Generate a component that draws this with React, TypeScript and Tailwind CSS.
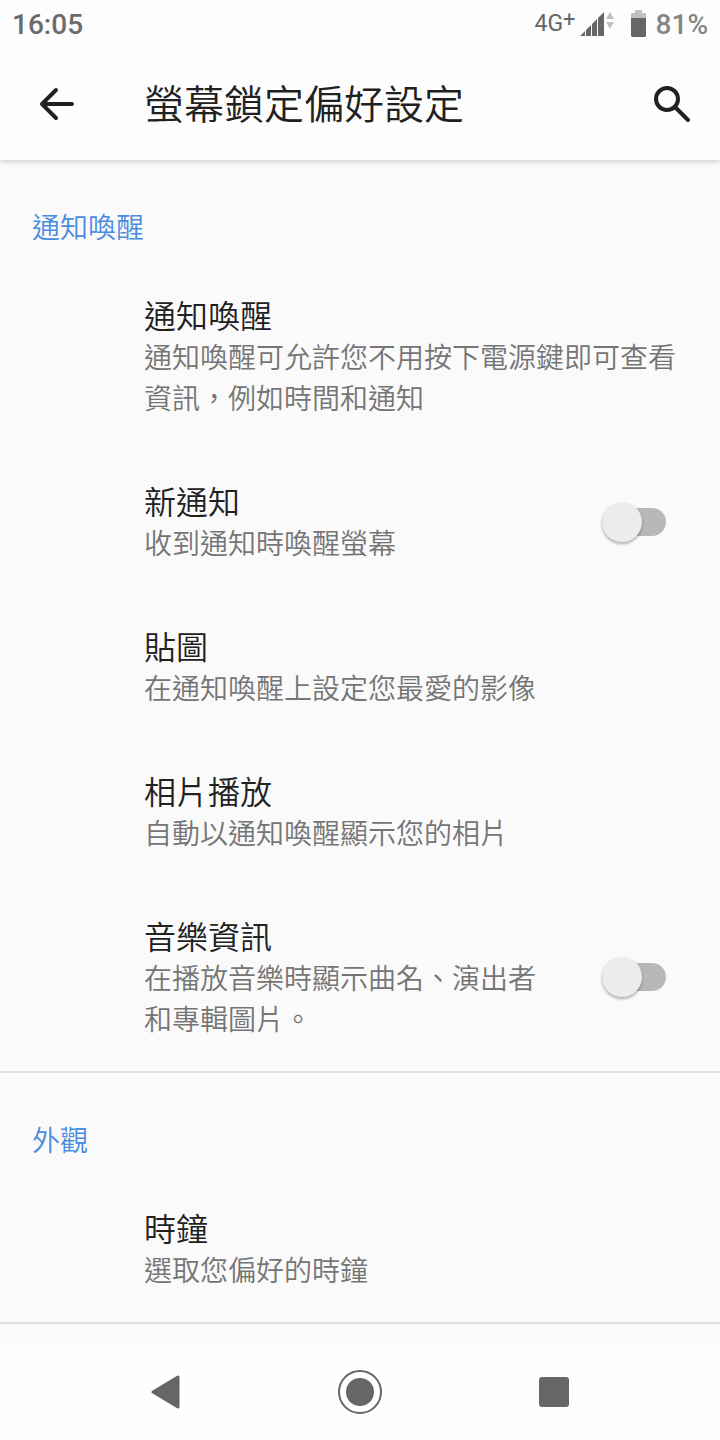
import React, { useState } from 'react';

interface PreferenceItem {
  id: string;
  title: string;
  summary: string;
  hasSwitch?: boolean;
}

interface PreferenceSection {
  id: string;
  title: string;
  items: PreferenceItem[];
}

const sections: PreferenceSection[] = [
  {
    id: 'wake',
    title: '通知喚醒',
    items: [
      { id: 'about', title: '通知喚醒', summary: '通知喚醒可允許您不用按下電源鍵即可查看資訊，例如時間和通知' },
      { id: 'newNotification', title: '新通知', summary: '收到通知時喚醒螢幕', hasSwitch: true },
      { id: 'sticker', title: '貼圖', summary: '在通知喚醒上設定您最愛的影像' },
      { id: 'photos', title: '相片播放', summary: '自動以通知喚醒顯示您的相片' },
      { id: 'music', title: '音樂資訊', summary: '在播放音樂時顯示曲名、演出者和專輯圖片。', hasSwitch: true },
    ],
  },
  {
    id: 'appearance',
    title: '外觀',
    items: [{ id: 'clock', title: '時鐘', summary: '選取您偏好的時鐘' }],
  },
];

const StatusBar: React.FC = () => (
  <div className="flex h-12 items-center justify-between px-3 font-['Roboto',sans-serif] text-[28px] leading-8 font-medium">
    <span className="pt-0.5 text-[#6b6b6b]">16:05</span>
    <div className="flex items-center">
      <span className="mr-1 flex items-start font-normal text-[#666666]">
        <span className="text-[23px] leading-8">4G</span>
        <span className="text-[22px] leading-6">+</span>
      </span>
      <svg className="h-7 w-9" viewBox="0 0 36 28" aria-hidden="true">
        <path d="M0 26h5v-5zM6 26h5V15l-5 5zM12 26h5V9l-5 5zM18 26h6V2l-6 6z" fill="#666666" />
        <path d="M26 9l4-7 4 7zM26 12h8l-4 7z" fill="#c0c0c0" />
      </svg>
      <svg className="mr-2.5 ml-3.5 h-7 w-4" viewBox="0 0 16 28" aria-hidden="true">
        <path d="M5 0h7v3h4v5H1V3h4z" fill="#c0c0c0" />
        <path d="M1 8h15v18l-1 1H2l-1-1z" fill="#666666" />
      </svg>
      <span className="pt-0.5 text-[#858585]">81%</span>
    </div>
  </div>
);

const AppBar: React.FC = () => (
  <div className="flex h-28 items-center px-8">
    <button type="button" aria-label="返回" className="mr-16 flex h-12 w-12 items-center justify-center">
      <svg className="h-12 w-12" viewBox="0 0 48 48" fill="none" stroke="#212121" strokeWidth="4" strokeLinecap="round" strokeLinejoin="round" aria-hidden="true">
        <path d="M40 24H10M24 10L10 24l14 14" />
      </svg>
    </button>
    <h1 className="flex-1 pb-1 text-[40px] leading-[56px] font-[350] text-[#212121]">螢幕鎖定偏好設定</h1>
    <button type="button" aria-label="搜尋" className="-mr-2 flex h-12 w-12 items-center justify-center">
      <svg className="h-12 w-12" viewBox="0 0 48 48" fill="none" stroke="#212121" strokeWidth="4" strokeLinecap="round" aria-hidden="true">
        <circle cx="19" cy="19" r="11" />
        <path d="M28 28l12 12" />
      </svg>
    </button>
  </div>
);

const PreferenceRow: React.FC<{ item: PreferenceItem }> = ({ item }) => {
  const [checked, setChecked] = useState(false);

  const text = (
    <span className="block flex-1">
      <span id={`${item.id}-title`} className="mb-1 block text-[32px] leading-9 text-[#212121]">{item.title}</span>
      <span className="block text-[28px] leading-[41px] text-[#757575]">{item.summary}</span>
    </span>
  );

  if (!item.hasSwitch) {
    return (
      <button type="button" className="flex w-full py-8 pr-8 pl-36 text-left">
        {text}
      </button>
    );
  }

  return (
    <label className="flex items-center gap-14 py-8 pr-[54px] pl-36">
      {text}
      <input
        type="checkbox"
        role="switch"
        aria-labelledby={`${item.id}-title`}
        checked={checked}
        onChange={(e) => setChecked(e.target.checked)}
        className="mb-0.5 flex h-7 w-16 shrink-0 appearance-none items-center rounded-full bg-[#b8b8b8] before:block before:size-10 before:rounded-full before:bg-[#ececec] before:shadow-[0_2px_3px_rgba(0,0,0,0.3)] before:content-[''] checked:justify-end checked:bg-[#9fc2f0] checked:before:bg-[#4285dc]"
      />
    </label>
  );
};

const NavigationBar: React.FC = () => (
  <nav className="flex h-24 items-center justify-center bg-[#fefefe] text-[#666666]">
    <button type="button" aria-label="上一頁" className="flex h-24 flex-1 items-center justify-end">
      <svg className="h-12 w-12" viewBox="0 0 48 48" aria-hidden="true">
        <path d="M11 24L36 9v30z" fill="currentColor" stroke="currentColor" strokeWidth="3" strokeLinejoin="round" />
      </svg>
    </button>
    <button type="button" aria-label="主畫面" className="mx-[146px] flex h-24 w-12 items-center justify-center">
      <svg className="h-12 w-12" viewBox="0 0 48 48" aria-hidden="true">
        <circle cx="24" cy="24" r="21" fill="none" stroke="currentColor" strokeWidth="2" />
        <circle cx="24" cy="24" r="14" fill="currentColor" />
      </svg>
    </button>
    <button type="button" aria-label="最近使用" className="flex h-24 flex-1 items-center">
      <svg className="h-12 w-12" viewBox="0 0 48 48" aria-hidden="true">
        <rect x="9" y="9" width="30" height="30" rx="3" fill="currentColor" />
      </svg>
    </button>
  </nav>
);

export default function App() {
  return (
    <div className="flex min-h-screen flex-col bg-[#fafafa] font-['Noto_Sans_CJK_TC',sans-serif] font-[350]" lang="zh-Hant">
      <header className="bg-[#fdfdfd] shadow-[0_1px_6px_rgba(0,0,0,0.22)]">
        <StatusBar />
        <AppBar />
      </header>

      <main className="flex-1">
        {sections.map((section) => (
          <section key={section.id} className="border-b-2 border-[#e0e0e0]">
            <h2 className="px-8 pt-[46px] pb-[18px] text-[28px] leading-10 font-[350] text-[#4a8ce0]">{section.title}</h2>
            {section.items.map((item) => (
              <PreferenceRow key={item.id} item={item} />
            ))}
          </section>
        ))}
      </main>

      <NavigationBar />
    </div>
  );
}
